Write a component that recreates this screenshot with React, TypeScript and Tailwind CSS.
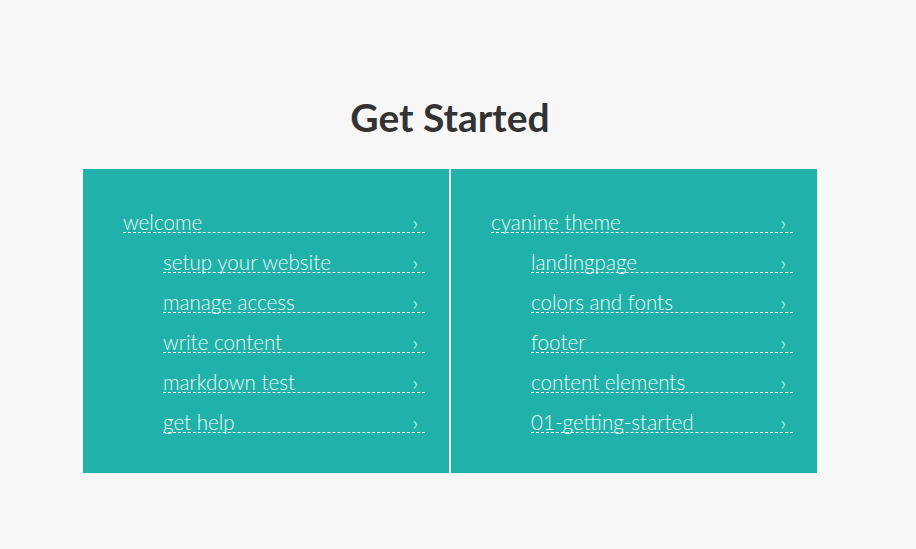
const left = {
  title: 'welcome',
  items: ['setup your website', 'manage access', 'write content', 'markdown test', 'get help'],
};

const right = {
  title: 'cyanine theme',
  items: ['landingpage', 'colors and fonts', 'footer', 'content elements', '01-getting-started'],
};

function Row({ label, sub }: { label: string; sub?: boolean }) {
  return (
    <a
      href="#"
      className={`flex items-end justify-between border-b border-dashed border-[#eef9f6] h-[25px] leading-[19px] ${
        sub ? 'ml-10' : ''
      }`}
    >
      <span>{label}</span>
      <span className="mr-[7px] text-[20px]">›</span>
    </a>
  );
}

function Panel({ title, items }: { title: string; items: string[] }) {
  return (
    <div className="bg-[#20b2aa] pt-[39px] pb-10 pl-10 pr-6 flex flex-col gap-[15px]">
      <Row label={title} />
      {items.map((item) => (
        <Row key={item} label={item} sub />
      ))}
    </div>
  );
}

export default function App() {
  return (
    <div
      className="min-h-screen bg-[#f7f7f7] pt-[96px]"
      style={{ fontFamily: 'Lato, "Open Sans", sans-serif' }}
    >
      <div className="ml-[83px] w-[734px]">
        <h1 className="text-center text-[39px] font-bold leading-[43px] text-[#333333]">Get Started</h1>
        <div className="mt-[30px] grid grid-cols-2 gap-[2px] text-[20.6px] font-light text-[#eef9f6]">
          <Panel title={left.title} items={left.items} />
          <Panel title={right.title} items={right.items} />
        </div>
      </div>
    </div>
  );
}
